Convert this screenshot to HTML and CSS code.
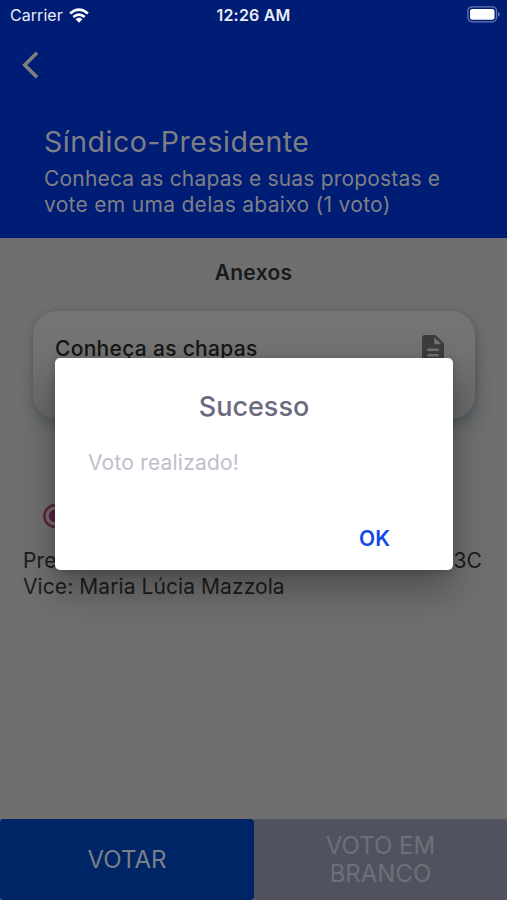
FILE: index.html
```html
<!DOCTYPE html>
<html lang="pt-BR">
<head>
<meta charset="utf-8">
<title>Síndico-Presidente</title>
<link rel="stylesheet" href="styles.css">
</head>
<body>
<div class="screen">
  <header class="header">
    <div class="status">
      <div class="carrier"><span class="carrier-name">Carrier</span>
        <svg class="wifi" viewBox="0 0 20 15"><g fill="none" stroke="#fff" stroke-width="2.7"><path d="M1.1 5.4Q10-2.3 18.9 5.4"/><path d="M4.3 9Q10 4.2 15.7 9"/></g><path fill="#fff" d="M6.6 11.2Q10 8.5 13.4 11.2L10 14.8z"/></svg>
      </div>
      <span class="time">12:26 AM</span>
      <svg class="battery" viewBox="0 0 33 17"><rect x=".9" y=".8" width="28.6" height="15" rx="4.2" fill="none" stroke="#6877ad" stroke-width="1.3"/><rect x="3" y="3" width="24.5" height="10.7" rx="2.3" fill="#fff"/><path d="M31 6q1.7.6 1.7 2.3T31 10.6z" fill="#6877ad"/></svg>
    </div>
    <svg class="back" viewBox="0 0 17 28"><path d="M15 1.7 2.7 14 15 26.3" fill="none" stroke="#7f7f7f" stroke-width="3.6"/></svg>
    <h1 class="title">Síndico-Presidente</h1>
    <p class="subtitle">Conheca as chapas e suas propostas e<br><span class="subtitle-end">vote em uma delas abaixo (1 voto)</span></p>
  </header>
  <main class="content">
    <h2 class="section">Anexos</h2>
    <article class="card">
      <span class="card-title">Conheça as chapas</span>
      <svg class="doc" viewBox="0 0 22 28"><path fill="#3c3c3c" fill-rule="evenodd" d="M3 0H13.5L22 8.5V25a3 3 0 0 1-3 3H3a3 3 0 0 1-3-3V3a3 3 0 0 1 3-3zM12.3 2.2V9.3H19.6zM5.3 13.5V16H16.7V13.5zM5.3 19V21.5H16.7V19z"/></svg>
    </article>
    <svg class="radio" viewBox="0 0 24 24"><circle cx="12" cy="12" r="10.7" fill="none" stroke="#5a2440" stroke-width="2.4"/><circle cx="12" cy="12" r="6.2" fill="#5a2440"/></svg>
    <div class="candidates">
      <div class="row"><span>Pre</span><span>3C</span></div>
      <div class="vice">Vice: Maria Lúcia Mazzola</div>
    </div>
  </main>
  <footer class="actions">
    <button class="action vote">VOTAR</button>
    <button class="action blank">VOTO EM<br>BRANCO</button>
  </footer>
  <section class="dialog" role="dialog">
    <h2 class="dialog-title">Sucesso</h2>
    <p class="dialog-text">Voto realizado!</p>
    <button class="ok">OK</button>
  </section>
</div>
</body>
</html>
```
FILE: styles.css
```css
* { box-sizing: border-box; margin: 0; }
body { font-family: Inter, "Liberation Sans", sans-serif; background: #6f6f6f; }
svg { display: block; flex: none; }
button { border: 0; font: inherit; padding: 0; }
.screen { position: relative; width: 507px; height: 900px; display: flex; flex-direction: column; overflow: hidden; background: #6f6f6f; white-space: nowrap; }
.header { height: 238px; background: #001d75; color: #7f7f86; flex: none; }
.status { height: 30px; padding: 0 7px 0 10px; display: grid; grid-template-columns: 1fr auto 1fr; align-items: center; color: #e9ecf7; font-size: 16px; }
.carrier { display: flex; align-items: center; gap: 6px; }
.carrier-name { letter-spacing: .05px; }
.wifi { width: 20px; height: 15px; }
.time { font-weight: 600; letter-spacing: .2px; margin-right: 3px; }
.battery { width: 33px; height: 17px; justify-self: end; margin-top: -2px; }
.back { width: 17px; height: 28px; margin: 21px 0 0 22px; }
.title { margin: 45px 0 0 44px; font-size: 28.5px; font-weight: 400; line-height: 36px; letter-spacing: .5px; }
.subtitle { margin: 6px 0 0 44px; font-size: 21px; line-height: 25.5px; letter-spacing: .18px; }
.subtitle-end { letter-spacing: .3px; }
.content { flex: 1; }
.section { margin-top: 22px; text-align: center; font-size: 21px; line-height: 26px; font-weight: 600; letter-spacing: .3px; color: #1a1a1a; }
.card { margin: 25px 32px 0 33px; height: 108px; border-radius: 24px; padding: 24px 31px 0 22px; display: flex; justify-content: space-between; background: linear-gradient(#757575, #727272 40%, #696969); box-shadow: 2px 6px 14px rgba(37, 55, 68, .4), 0 0 4px rgba(60, 75, 80, .2); }
.card-title { font-size: 21px; line-height: 27px; font-weight: 500; letter-spacing: .3px; color: #151515; }
.doc { width: 22px; height: 28px; }
.radio { width: 24px; height: 24px; margin: 85px 0 0 43px; }
.candidates { margin: 20px 25px 0 23px; font-size: 21px; line-height: 26px; letter-spacing: .08px; color: #1c1c1c; }
.row { display: flex; justify-content: space-between; }
.actions { height: 81px; flex: none; display: grid; grid-template-columns: 254px 253px; }
.action { border-radius: 3px; font-size: 24px; line-height: 28px; color: #7b7f88; }
.vote { background: #002566; }
.blank { background: #50535f; color: #6d7078; }
.dialog { position: absolute; left: 55px; top: 358px; width: 398px; height: 212px; border-radius: 5px; background: #fff; display: flex; flex-direction: column; box-shadow: 0 20px 38px rgba(0, 0, 0, .3), 0 2px 9px rgba(0, 0, 0, .18); }
.dialog-title { margin-top: 32px; text-align: center; font-size: 27px; line-height: 34px; font-weight: 500; letter-spacing: 0; color: #6b6b80; }
.dialog-text { margin: 25px 0 0 33px; font-size: 21px; line-height: 28px; letter-spacing: .2px; color: #bcbfca; }
.ok { align-self: flex-end; margin: 48px 63px 0 0; background: none; font-size: 21px; line-height: 28px; font-weight: 600; color: #1248e8; }
```
